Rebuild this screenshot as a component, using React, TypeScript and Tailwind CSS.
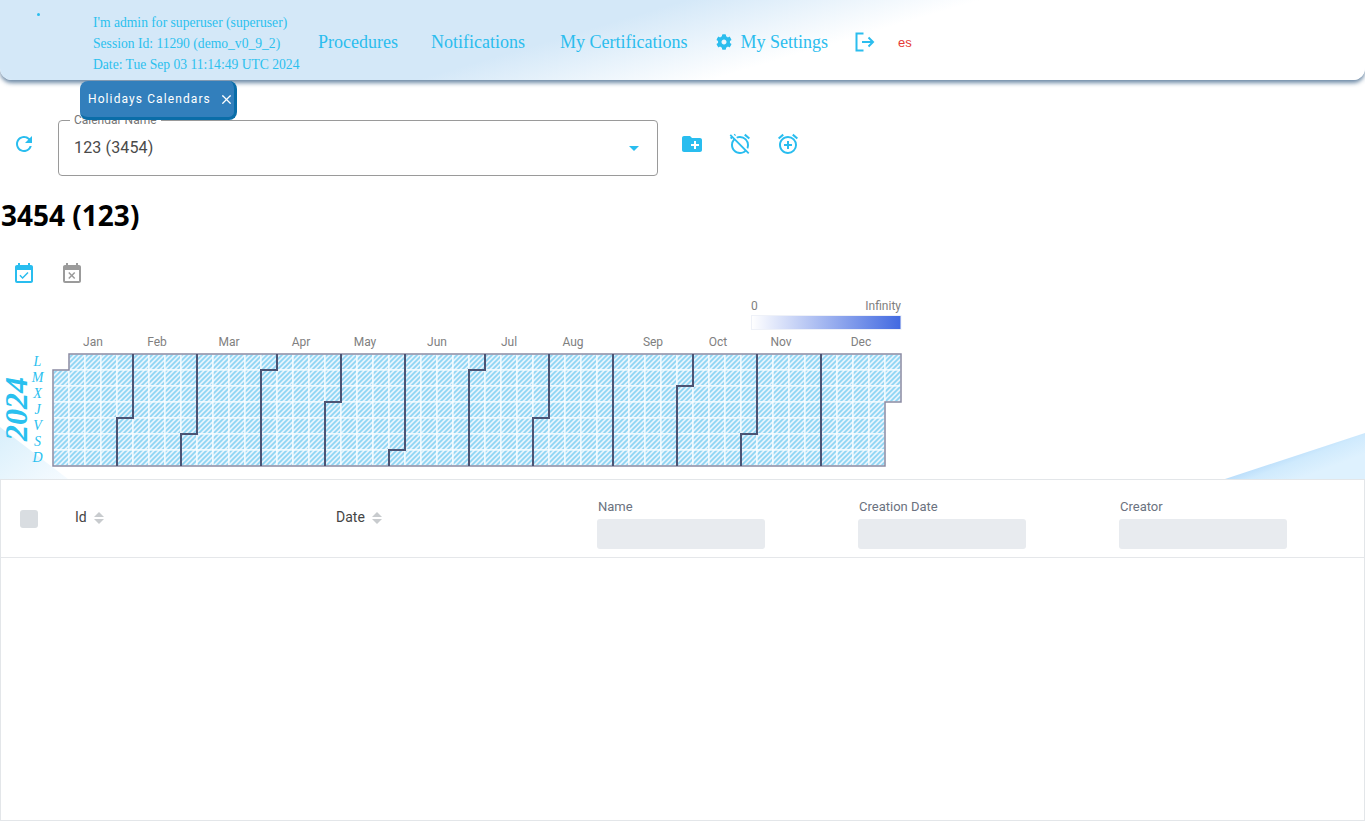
import { X } from "lucide-react";
import { FaCog } from "react-icons/fa";
import {
  MdAlarmAdd,
  MdAlarmOff,
  MdArrowDropDown,
  MdCreateNewFolder,
  MdEventAvailable,
  MdEventBusy,
  MdRefresh,
} from "react-icons/md";

const CELL = 16;
const LEFT = 53;
const TOP = 56; // grid top inside the svg (354 on the page)

// top column of each month break, and the row where it steps back one column
const monthBreaks = [
  { col: 5, row: 4 },
  { col: 9, row: 5 },
  { col: 14, row: 1 },
  { col: 18, row: 3 },
  { col: 22, row: 6 },
  { col: 27, row: 1 },
  { col: 31, row: 4 },
  { col: 35, row: 7 },
  { col: 40, row: 2 },
  { col: 44, row: 5 },
  { col: 48, row: 7 },
];

const monthLabels = [
  ["Jan", 93],
  ["Feb", 157],
  ["Mar", 229],
  ["Apr", 301],
  ["May", 365],
  ["Jun", 437],
  ["Jul", 509],
  ["Aug", 573],
  ["Sep", 653],
  ["Oct", 718],
  ["Nov", 781],
  ["Dec", 861],
] as const;

const weekDays = ["L", "M", "X", "J", "V", "S", "D"];

function breakPath(col: number, row: number) {
  const x = LEFT + col * CELL;
  const y = TOP + row * CELL;
  const bottom = TOP + 7 * CELL;
  if (row >= 7) return `M${x} ${TOP}V${bottom}`;
  return `M${x} ${TOP}V${y}H${x - CELL}V${bottom}`;
}

function CalendarHeatmap() {
  const cells = [];
  for (let c = 0; c < 53; c++) {
    for (let r = 0; r < 7; r++) {
      if (c === 0 && r === 0) continue;
      if (c === 52 && r > 2) continue;
      cells.push(
        <rect
          key={`${c}-${r}`}
          x={LEFT + c * CELL}
          y={TOP + r * CELL}
          width={CELL}
          height={CELL}
          fill="url(#hatch)"
          stroke="#fbfdff"
          strokeWidth="1.2"
        />
      );
    }
  }
  const x0 = LEFT;
  const x1 = LEFT + 16;
  const xEnd = LEFT + 53 * CELL;
  const yEnd = TOP + 7 * CELL;
  return (
    <svg width="910" height="181" className="block">
      <defs>
        <pattern id="hatch" x={LEFT} y={TOP} width="5" height="5" patternUnits="userSpaceOnUse">
          <rect width="5" height="5" fill="#e6f4fe" />
          <path d="M-1 1L1 -1M0 5L5 0M4 6L6 4" stroke="#8ed5f3" strokeWidth="1.7" />
        </pattern>
        <linearGradient id="legend">
          <stop offset="0" stopColor="#ffffff" />
          <stop offset="1" stopColor="#4169e1" />
        </linearGradient>
      </defs>
      <text x="751" y="12" fontSize="12" fill="#808080" fontFamily="Roboto, sans-serif">0</text>
      <text x="901" y="12" fontSize="12" fill="#808080" textAnchor="end" fontFamily="Roboto, sans-serif">Infinity</text>
      <rect x="751.5" y="17.5" width="149.5" height="14" fill="url(#legend)" stroke="#eef1f8" />
      {monthLabels.map(([m, x]) => (
        <text key={m} x={x} y="48" fontSize="12" fill="#808080" textAnchor="middle" fontFamily="Roboto, sans-serif">
          {m}
        </text>
      ))}
      {weekDays.map((d, i) => (
        <text
          key={d}
          x="37.5"
          y={TOP + 12 + i * CELL}
          fontSize="14"
          fontStyle="italic"
          fill="#29c0ef"
          textAnchor="middle"
          fontFamily="'Liberation Serif', serif"
        >
          {d}
        </text>
      ))}
      <text
        transform="translate(27 143) rotate(-90)"
        fontSize="32"
        fontStyle="italic"
        fontWeight="bold"
        fill="#29c0ef"
        fontFamily="'Liberation Serif', serif"
      >
        2024
      </text>
      {cells}
      <path
        d={`M${x1} ${TOP}H${xEnd}V${TOP + 3 * CELL}H${xEnd - CELL}V${yEnd}H${x0}V${TOP + CELL}H${x1}Z`}
        fill="none"
        stroke="#8b8ba3"
        strokeWidth="1.5"
      />
      {monthBreaks.map((b) => (
        <path key={b.col} d={breakPath(b.col, b.row)} fill="none" stroke="#4c5474" strokeWidth="2" />
      ))}
    </svg>
  );
}

function SortArrows() {
  return (
    <span className="ml-[7px] flex flex-col gap-[2px]">
      <span className="h-0 w-0 border-x-[5px] border-b-[5px] border-x-transparent border-b-[#c8cbce]" />
      <span className="h-0 w-0 border-x-[5px] border-t-[5px] border-x-transparent border-t-[#c8cbce]" />
    </span>
  );
}

function FilterColumn({ label }: { label: string }) {
  return (
    <div className="w-[261px] shrink-0 pl-px pt-[10px]">
      <div className="text-[13px] leading-[15px] text-[#6b7280]">{label}</div>
      <div className="mt-[5px] h-[30px] w-[168px] -translate-x-px rounded-[3px] bg-[#e8ebef]" />
    </div>
  );
}

function NavLink({ children, className }: { children: string; className: string }) {
  return <a className={`text-[18px] leading-none text-[#2bbdee] ${className}`}>{children}</a>;
}

function LogoutIcon() {
  return (
    <svg width="20" height="20" viewBox="0 0 20 20" fill="none" stroke="#2bbdee" strokeWidth="2" className="ml-[27px] shrink-0">
      <path d="M8.5 1.5H1.5V18.5H8.5" />
      <path d="M7 10H18M13.5 5.5L18 10L13.5 14.5" />
    </svg>
  );
}

export default function App() {
  return (
    <div className="flex h-[821px] flex-col overflow-hidden bg-white font-['Roboto',sans-serif]">
      <header className="flex h-[80px] shrink-0 items-center rounded-b-xl bg-[linear-gradient(163.5deg,#d4e8f8_0%,#d4e8f8_42%,#ffffff_60%)] pl-[37px] pt-[4px] shadow-[0_3px_4px_rgba(50,90,130,0.7)] font-['Liberation_Serif',serif]">
        <span className="mb-[56px] h-[3px] w-[3px] rounded-full bg-[#2bbdee]" />
        <div className="ml-[53px] mt-[3px] w-[225px] text-[13.6px] leading-[21px] text-[#2bc0ee]">
          <div>I'm admin for superuser (superuser)</div>
          <div>Session Id: 11290 (demo_v0_9_2)</div>
          <div>Date: Tue Sep 03 11:14:49 UTC 2024</div>
        </div>
        <NavLink className="ml-0">Procedures</NavLink>
        <NavLink className="ml-[33px]">Notifications</NavLink>
        <NavLink className="ml-[35px]">My Certifications</NavLink>
        <FaCog className="ml-[29px] text-[#2bbdee]" size={16} />
        <NavLink className="ml-[8px]">My Settings</NavLink>
        <LogoutIcon />
        <span className="ml-[23px] mt-[2px] font-['Liberation_Sans',sans-serif] text-[13px] text-[#e53935]">es</span>
      </header>

      <div className="relative z-10 ml-20 mt-px flex h-[39px] w-[157px] items-center rounded-lg border-r-[3px] border-b-[3px] border-[#0a6da8] bg-[#327fbc] pl-2">
        <span className="whitespace-nowrap text-[12px] tracking-[1.1px] text-white">Holidays Calendars</span>
        <X className="ml-[8px] shrink-0 text-white" size={15} strokeWidth={2} />
      </div>

      <div className="flex h-[56px] shrink-0 items-start">
        <button className="flex h-12 w-12 items-center justify-center text-[#29bdef]">
          <MdRefresh size={24} />
        </button>
        <div className="relative ml-[10px] flex h-[56px] w-[600px] items-center justify-between rounded border border-[#9a9a9a] pl-[15px] pr-[11px]">
          <span className="absolute -top-[8px] left-[11px] bg-white px-1 text-[12px] leading-[14px] text-[#757575]">Calendar Name</span>
          <span className="text-[16px] tracking-[0.15px] text-[#4a4a4a]">123 (3454)</span>
          <MdArrowDropDown className="text-[#29bdef]" size={24} />
        </div>
        <button className="ml-[10px] flex h-12 w-12 items-center justify-center text-[#29bdef]">
          <MdCreateNewFolder size={24} />
        </button>
        <button className="flex h-12 w-12 items-center justify-center text-[#29bdef]">
          <MdAlarmOff size={24} />
        </button>
        <button className="flex h-12 w-12 items-center justify-center text-[#29bdef]">
          <MdAlarmAdd size={24} />
        </button>
      </div>

      <h1 className="mt-[20px] h-[54px] shrink-0 pl-px font-['Noto_Sans',sans-serif] text-[28px] font-bold leading-[38px] text-black">3454 (123)</h1>

      <div className="flex h-12 shrink-0">
        <button className="flex h-12 w-12 items-center justify-center text-[#29bdef]">
          <MdEventAvailable size={24} />
        </button>
        <button className="flex h-12 w-12 items-center justify-center text-[#9b9b9b]">
          <MdEventBusy size={24} />
        </button>
      </div>

      <div className="relative h-[181px] shrink-0">
        <svg width="1365" height="181" className="absolute inset-0">
          <defs>
            <linearGradient id="decoLeft" x1="0" y1="0" x2="1" y2="1">
              <stop offset="0" stopColor="#d8effb" />
              <stop offset="1" stopColor="#f6fbff" />
            </linearGradient>
            <linearGradient id="decoRight" gradientUnits="userSpaceOnUse" x1="1290" y1="155" x2="1300" y2="181">
              <stop offset="0" stopColor="#b9ddfb" />
              <stop offset="0.35" stopColor="#cfeafd" />
              <stop offset="1" stopColor="#def1fe" />
            </linearGradient>
          </defs>
          <polygon points="0,129 68,181 0,181" fill="url(#decoLeft)" />
          <polygon points="1365,135 1225,181 1365,181" fill="url(#decoRight)" />
        </svg>
        <div className="relative">
          <CalendarHeatmap />
        </div>
      </div>

      <div className="relative flex-1 border border-[#e3e6e9] bg-white">
        <div className="flex h-[78px] items-center overflow-hidden border-b border-[#e5e7ea]">
          <span className="ml-[19px] h-[18px] w-[18px] shrink-0 rounded-[3px] bg-[#d9dde1]" />
          <div className="mb-[2px] ml-[37px] flex w-[261px] shrink-0 items-center text-[14px] text-[#444]">
            Id
            <SortArrows />
          </div>
          <div className="mb-[2px] flex w-[261px] shrink-0 items-center text-[14px] text-[#444]">
            Date
            <SortArrows />
          </div>
          <FilterColumn label="Name" />
          <FilterColumn label="Creation Date" />
          <FilterColumn label="Creator" />
        </div>
      </div>
    </div>
  );
}
